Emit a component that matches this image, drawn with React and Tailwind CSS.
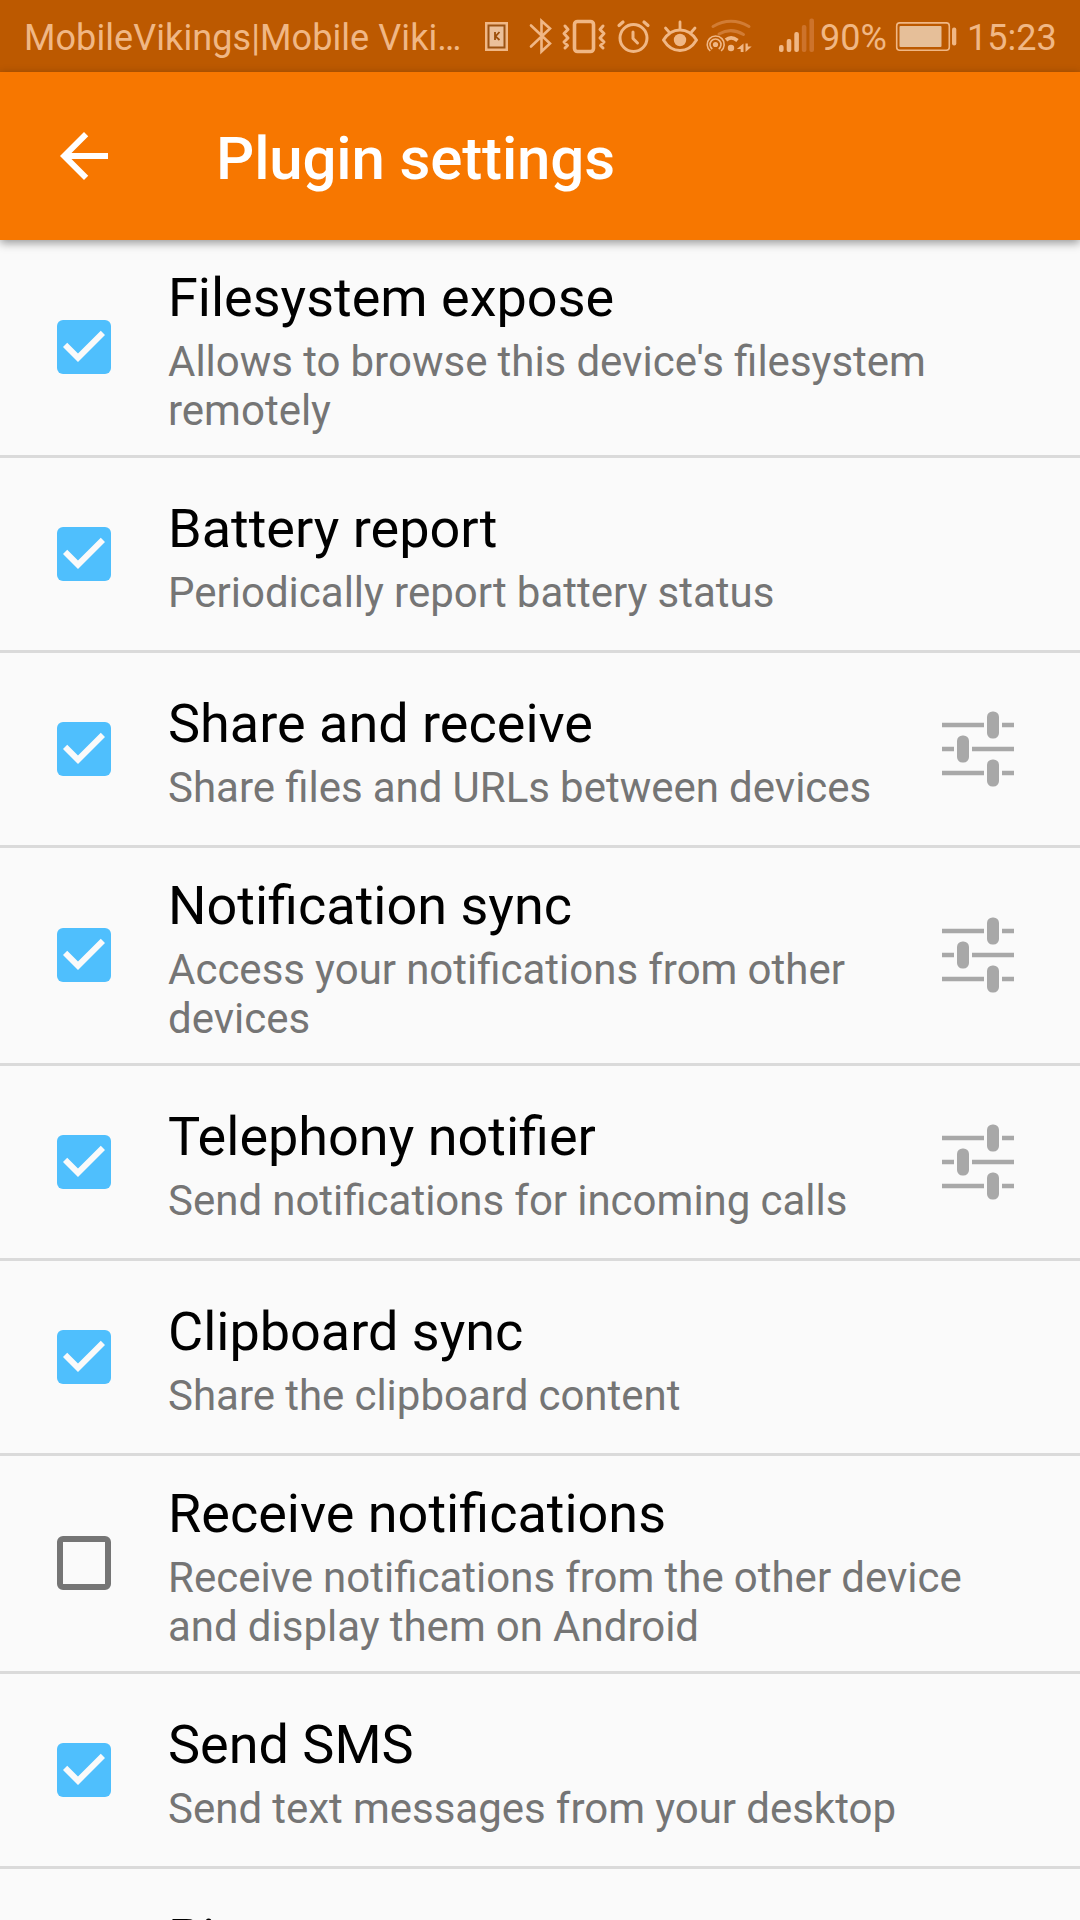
const plugins = [
  { title: 'Filesystem expose', lines: ["Allows to browse this device's filesystem", 'remotely'], checked: true },
  { title: 'Battery report', lines: ['Periodically report battery status'], checked: true },
  { title: 'Share and receive', lines: ['Share files and URLs between devices'], checked: true, settings: true },
  { title: 'Notification sync', lines: ['Access your notifications from other', 'devices'], checked: true, settings: true },
  { title: 'Telephony notifier', lines: ['Send notifications for incoming calls'], checked: true, settings: true },
  { title: 'Clipboard sync', lines: ['Share the clipboard content'], checked: true },
  { title: 'Receive notifications', lines: ['Receive notifications from the other device', 'and display them on Android'], checked: false },
  { title: 'Send SMS', lines: ['Send text messages from your desktop'], checked: true },
  { title: 'Ping', lines: [''], checked: true },
];

function StatusIcons() {
  return (
    <svg className="h-[72px] w-[338px] shrink-0" viewBox="480 0 338 72" fill="none" stroke="#f0b785" strokeLinecap="round" strokeLinejoin="round">
      {/* SIM toolkit */}
      <g stroke="none">
        <rect x="485" y="22" width="23" height="29" fill="#f0b785" />
        <rect x="487.5" y="24.5" width="18" height="24" fill="#9c5312" />
        <rect x="489.5" y="26.5" width="14" height="20" fill="#ebc09a" />
      </g>
      <path d="M495 32v8M499.500 32l-4 4.300 4 3.700" stroke="#9c4f0a" strokeWidth="1.8" strokeLinecap="butt" />
      {/* Bluetooth */}
      <path d="M531 25.500l19 18-8.500 8V21l8.500 7.500-19 18" strokeWidth="2.6" strokeLinejoin="miter" />
      {/* Vibrate */}
      <rect x="574.500" y="21.500" width="19" height="30" rx="3" strokeWidth="3.6" />
      <path d="M565 26l3 3.500-4 4 4 4.500-4 4 3.500 3.500-2.500 2.500M603 26l-3 3.500 4 4-4 4.500 4 4-3.500 3.500 2.500 2.500" strokeWidth="3" />
      {/* Alarm */}
      <circle cx="633.500" cy="38" r="13.500" strokeWidth="3" />
      <path d="M633 32v6.500l4.500 4.500" strokeWidth="3" />
      <path d="M619 25.500l4-3.500M648 25.500l-4-3.500" strokeWidth="3.2" />
      {/* Eye comfort */}
      <path d="M663.500 40C672 26.500 688 26.500 696.500 40C688 54 672 54 663.500 40Z" strokeWidth="3" />
      <circle cx="680" cy="40" r="6.200" fill="#f0b785" stroke="none" />
      <path d="M680 22v7M665.500 28l3.500 4M695 28l-3.500 4" strokeWidth="2.800" />
      {/* Wi-Fi with hotspot */}
      <path d="M713 26.500q18-10.500 36 0M719 34q12-7 24.500 0.500" stroke="#d17c34" strokeWidth="3" />
      <circle cx="715.500" cy="44.500" r="2.600" fill="#f0b785" stroke="none" />
      <path d="M712.300 49a5.500 5.500 0 1 1 6.400 0M710.300 51a8.500 8.500 0 1 1 10.800 0" strokeWidth="1.600" strokeLinecap="butt" />
      <path d="M726 40q5-4.500 11.500 0.500" strokeWidth="3.800" strokeLinecap="butt" />
      <circle cx="731" cy="48" r="3.200" fill="#f0b785" stroke="none" />
      <path d="M743.500 43.500v8.500h-2.800v-3h-3.900zM745.500 52v-8.500h2.300v3h3.900z" fill="#f0b785" stroke="none" />
      {/* Mobile signal */}
      <g stroke="none" fill="#f0b785">
        <rect x="779" y="45" width="4.600" height="7" rx="2" />
        <rect x="786.700" y="39" width="4.600" height="13" rx="2" />
        <rect x="794.300" y="32" width="4.600" height="20" rx="2" />
        <g fill="#cd732b">
          <rect x="801.800" y="25" width="4.600" height="27" rx="2" />
          <rect x="809.400" y="18.500" width="4.600" height="33.500" rx="2" />
        </g>
      </g>
    </svg>
  );
}

function BatteryIcon() {
  return (
    <svg className="h-[72px] w-[62px] shrink-0" viewBox="895 0 62 72" fill="none">
      <rect x="896.700" y="22.900" width="52.600" height="27.400" rx="3" stroke="#f0b785" strokeWidth="1.600" />
      <rect x="899.500" y="26" width="42" height="21" rx="1" fill="#e6bf99" />
      <rect x="952" y="27.500" width="4.300" height="18" rx="2" fill="#f0b785" />
    </svg>
  );
}

function StatusBar() {
  return (
    <div className="flex h-[72px] shrink-0 items-center bg-[#bc5900] pl-6 text-[36px] leading-[70px] text-[#f0b785]">
      <span className="w-[456px] shrink-0 pt-1 tracking-[0.08px] whitespace-nowrap">MobileVikings|Mobile Viki…</span>
      <StatusIcons />
      <span className="w-[77px] shrink-0 pt-1 pl-0.5">90%</span>
      <BatteryIcon />
      <span className="pt-1 pl-2.5">15:23</span>
    </div>
  );
}

function Header() {
  return (
    <header className="relative z-10 flex h-[168px] shrink-0 items-center bg-[#f77700] pl-12 text-white shadow-[0_3px_9px_rgba(0,0,0,0.4)]">
      <svg className="size-[72px] shrink-0" viewBox="0 0 24 24" fill="currentColor">
        <path d="M20 11H7.830l5.590-5.590L12 4l-8 8 8 8 1.410-1.410L7.830 13H20v-2z" />
      </svg>
      <h1 className="pt-1.5 pl-24 text-[60px] leading-[70px] font-medium tracking-[-0.15px]">Plugin settings</h1>
    </header>
  );
}

function Checkbox({ checked }) {
  if (!checked) return <span className="mb-[0.5px] size-[54px] shrink-0 rounded-md border-[6px] border-[#757575]" />;
  return (
    <span className="mb-[0.5px] flex size-[54px] shrink-0 items-center justify-center rounded-md bg-[#4fbffd]">
      <svg className="size-[54px]" viewBox="3 3 18 18" fill="#fafafa">
        <path d="M10 17l-5-5 1.410-1.410L10 14.170l7.590-7.590L19 8z" />
      </svg>
    </span>
  );
}

function TuneIcon() {
  return (
    <svg className="mb-[0.5px] h-[78px] w-[72px] shrink-0" viewBox="0 0 72 78" fill="#a8a8a8">
      <path d="M0 12.800h42v4.400H0zM60 12.800h12v4.400H60zM0 36.800h12v4.400H0zM30 36.800h42v4.400H30zM0 60.800h42v4.400H0zM60 60.800h12v4.400H60z" />
      <rect x="45" y="1.500" width="12" height="27" rx="5.500" />
      <rect x="15" y="25.500" width="12" height="27" rx="5.500" />
      <rect x="45" y="49.500" width="12" height="27" rx="5.500" />
    </svg>
  );
}

function PluginRow({ title, lines, checked, settings }) {
  return (
    <li className="flex min-h-[195px] shrink-0 items-center border-b-[3px] border-[#dadada] pr-[66px] pl-[57px] last:-mt-px">
      <Checkbox checked={checked} />
      <div className="grow pt-[26px] pb-[20px] pl-[57px] whitespace-nowrap">
        <h2 className="text-[54px] leading-[63px] text-black">{title}</h2>
        <p className="pt-2 text-[42px] leading-[49px] text-[#757575] [word-spacing:-0.3px]">
          {lines.map((line) => (
            <span key={line} className="block min-h-[49px]">{line}</span>
          ))}
        </p>
      </div>
      {settings && <TuneIcon />}
    </li>
  );
}

export default function App() {
  return (
    <div className="flex h-[1920px] w-[1080px] flex-col overflow-hidden bg-[#fafafa] font-[Roboto,sans-serif]">
      <StatusBar />
      <Header />
      <ul className="flex min-h-0 grow flex-col overflow-hidden">
        {plugins.map((plugin) => (
          <PluginRow key={plugin.title} {...plugin} />
        ))}
      </ul>
    </div>
  );
}
